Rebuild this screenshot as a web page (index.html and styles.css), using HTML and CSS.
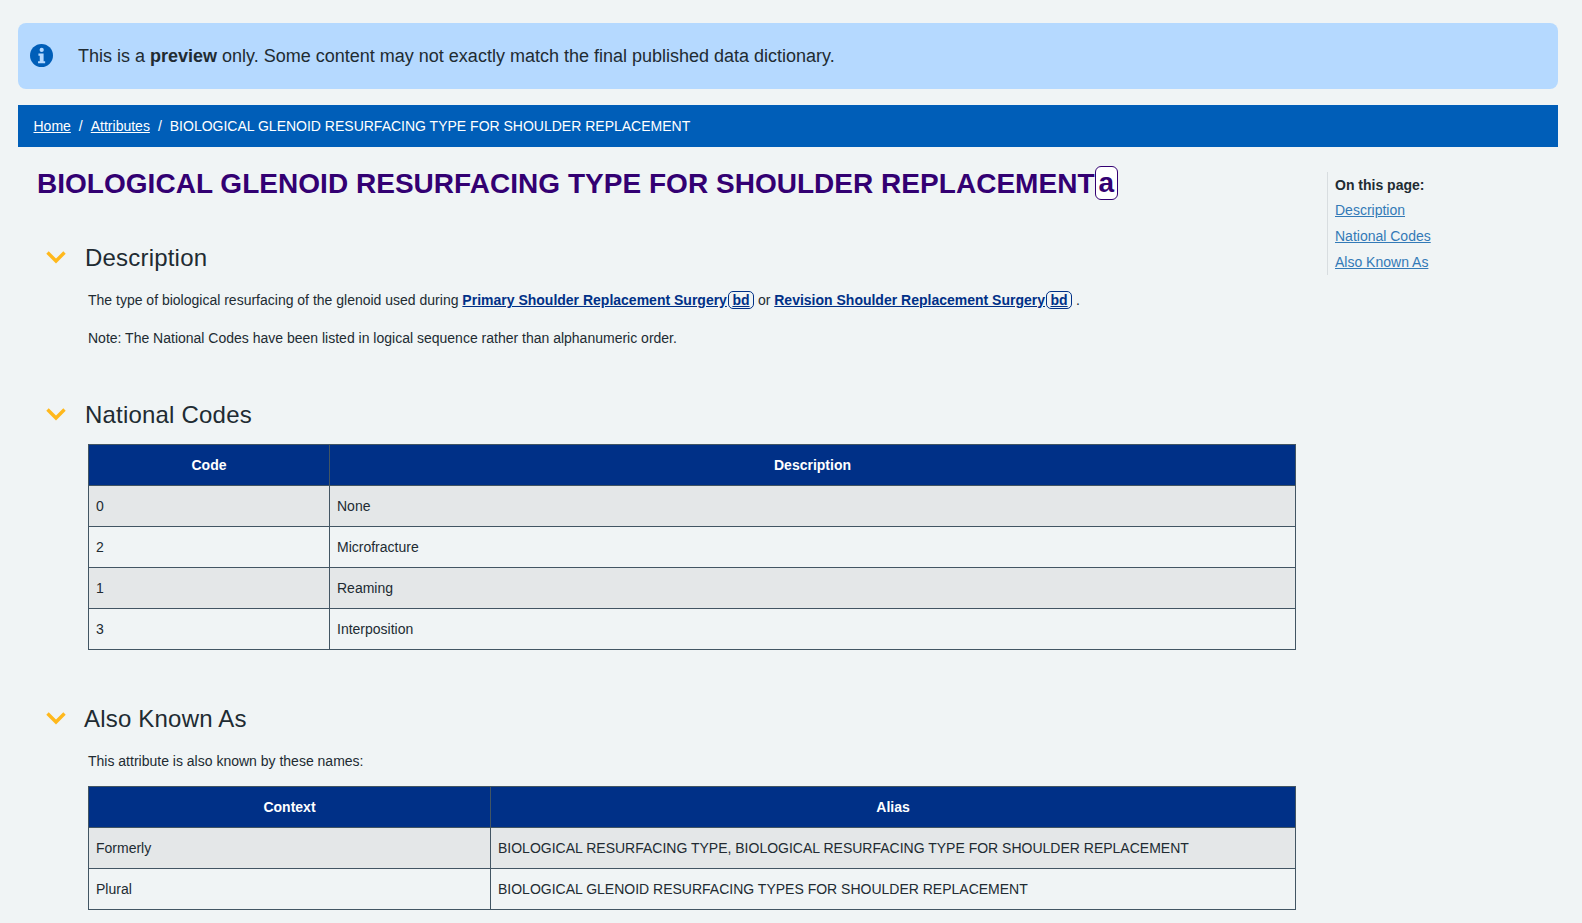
FILE: index.html
```html
<!DOCTYPE html>
<html lang="en">

<head>
    <meta charset="UTF-8">
    <title>BIOLOGICAL GLENOID RESURFACING TYPE FOR SHOULDER REPLACEMENT</title>
    <link rel="stylesheet" href="styles.css">
</head>

<body>
    <div class="notice">
        <svg class="notice-icon" viewBox="0 0 24 24">
            <circle cx="12" cy="12" r="12" fill="#005eb8"></circle>
            <circle cx="12.2" cy="6.2" r="2.2" fill="#b5d9ff"></circle>
            <path d="M8.8 10h5.4v8h1.6v2.2H8.400V18h1.800v-5.800H8.800z" fill="#b5d9ff"></path>
        </svg>
        <p>This is a <b>preview</b> only. Some content may not exactly match the final published data dictionary.</p>
    </div>

    <nav class="crumbs">
        <a href="#">Home</a><span class="sep">/</span><a href="#">Attributes</a><span class="sep">/</span><span>BIOLOGICAL GLENOID RESURFACING TYPE FOR SHOULDER REPLACEMENT</span>
    </nav>

    <div class="page">
        <main class="content">
            <h1>BIOLOGICAL GLENOID RESURFACING TYPE FOR SHOULDER REPLACEMENT<span class="badge">a</span></h1>

            <section class="block block-desc">
                <h2>
                    <svg class="chev" viewBox="0 0 22 14"><path d="M2.500 2.500 11 11l8.500-8.500"></path></svg>
                    <span>Description</span>
                </h2>
                <div class="body">
                    <p>The type of biological resurfacing of the glenoid used during <a class="term" href="#">Primary Shoulder Replacement Surgery</a><a class="term-badge" href="#">bd</a> or <a class="term" href="#">Revision Shoulder Replacement Surgery</a><a class="term-badge" href="#">bd</a> .</p>
                    <p>Note: The National Codes have been listed in logical sequence rather than alphanumeric order.</p>
                </div>
            </section>

            <section class="block block-codes">
                <h2>
                    <svg class="chev" viewBox="0 0 22 14"><path d="M2.500 2.500 11 11l8.500-8.500"></path></svg>
                    <span>National Codes</span>
                </h2>
                <div class="body">
                    <table class="codes">
                        <thead>
                            <tr><th>Code</th><th>Description</th></tr>
                        </thead>
                        <tbody>
                            <tr><td>0</td><td>None</td></tr>
                            <tr><td>2</td><td>Microfracture</td></tr>
                            <tr><td>1</td><td>Reaming</td></tr>
                            <tr><td>3</td><td>Interposition</td></tr>
                        </tbody>
                    </table>
                </div>
            </section>

            <section class="block block-aka">
                <h2>
                    <svg class="chev" viewBox="0 0 22 14"><path d="M2.500 2.500 11 11l8.500-8.500"></path></svg>
                    <span>Also Known As</span>
                </h2>
                <div class="body">
                    <p>This attribute is also known by these names:</p>
                    <table class="aliases">
                        <thead>
                            <tr><th>Context</th><th>Alias</th></tr>
                        </thead>
                        <tbody>
                            <tr><td>Formerly</td><td>BIOLOGICAL RESURFACING TYPE, BIOLOGICAL RESURFACING TYPE FOR SHOULDER REPLACEMENT</td></tr>
                            <tr><td>Plural</td><td>BIOLOGICAL GLENOID RESURFACING TYPES FOR SHOULDER REPLACEMENT</td></tr>
                        </tbody>
                    </table>
                </div>
            </section>
        </main>

        <aside class="toc">
            <strong>On this page:</strong>
            <a href="#">Description</a>
            <a href="#">National Codes</a>
            <a href="#">Also Known As</a>
        </aside>
    </div>
</body>

</html>
```

FILE: styles.css
```css
* {
    box-sizing: border-box;
}

html,
body {
    height: 923px;
    overflow: hidden;
}

body {
    margin: 0;
    padding: 23px 24px 0 18px;
    background: #f0f4f5;
    color: #212b32;
    font-family: "Liberation Sans", Arial, sans-serif;
    font-size: 14px;
}

p {
    margin: 0;
}

.notice {
    height: 66px;
    display: flex;
    align-items: center;
    padding: 0 12px;
    background: #b5d9ff;
    border-radius: 8px;
}

.notice-icon {
    width: 23px;
    height: 23px;
    flex: none;
    margin: -2px 25px 0 0;
}

.notice p {
    font-size: 18px;
}

.crumbs {
    height: 42px;
    margin-top: 16px;
    display: flex;
    align-items: center;
    padding-left: 15.5px;
    background: #005eb8;
    color: #fff;
    font-size: 14px;
}

.crumbs a {
    color: #fff;
}

.sep {
    margin: 0 8px;
}

.page {
    display: flex;
}

.content {
    width: 1278px;
    flex: none;
}

h1 {
    height: 36px;
    margin: 19px 0 0 19px;
    color: #330072;
    font-size: 28px;
    line-height: 36px;
    font-weight: 700;
    letter-spacing: 0.03px;
}

.badge {
    display: inline-block;
    padding: 0 3px;
    border: 1px solid #330072;
    border-radius: 6px;
    background: #fff;
    line-height: 32px;
    vertical-align: 1px;
}

.block h2 {
    display: flex;
    align-items: center;
    margin: 0;
    padding-left: 27px;
    font-size: 24px;
    font-weight: 400;
    line-height: 32px;
    letter-spacing: 0.2px;
}

.chev {
    width: 22px;
    height: 14px;
    margin-right: 18px;
    margin-top: -3px;
}

.chev path {
    fill: none;
    stroke: #ffb81c;
    stroke-width: 3.4;
}

.block-desc {
    margin-top: 40px;
}

.block-codes {
    margin-top: 51px;
}

.block-aka {
    margin-top: 53px;
}

.block-aka .chev {
    margin-right: 17px;
}

.body {
    margin-left: 70px;
    width: 1208px;
}

.block-desc .body {
    margin-top: 16px;
}

.block-desc p {
    line-height: 20px;
    margin-bottom: 18px;
}

.block-codes .body {
    margin-top: 13px;
}

.block-aka .body {
    margin-top: 16px;
}

.block-aka p {
    line-height: 20px;
    margin-bottom: 15px;
}

.term {
    color: #003087;
    font-weight: 700;
}

.term-badge {
    display: inline-block;
    margin-left: 1px;
    padding: 0 3.5px;
    border: 1px solid #003087;
    border-radius: 5px;
    color: #003087;
    font-weight: 700;
    line-height: 16px;
}

table {
    width: 100%;
    border-collapse: collapse;
    table-layout: fixed;
}

th,
td {
    height: 41px;
    border: 1px solid #425563;
    padding: 0 7px;
    text-align: left;
}

th {
    background: #003087;
    color: #fff;
    text-align: center;
}

tbody tr:nth-child(odd) td {
    background: #e4e7e8;
}

.codes th:first-child {
    width: 241px;
}

.aliases th:first-child {
    width: 402px;
}

.toc {
    display: flex;
    flex-direction: column;
    align-items: flex-start;
    gap: 6px;
    height: 103px;
    margin: 25px 0 0 31px;
    padding: 3px 0 0 7px;
    border-left: 1px solid #d8dde0;
    line-height: 20px;
}

.toc strong {
    margin-bottom: -1px;
    color: #212b32;
}

.toc a {
    color: #337ab7;
}
```
